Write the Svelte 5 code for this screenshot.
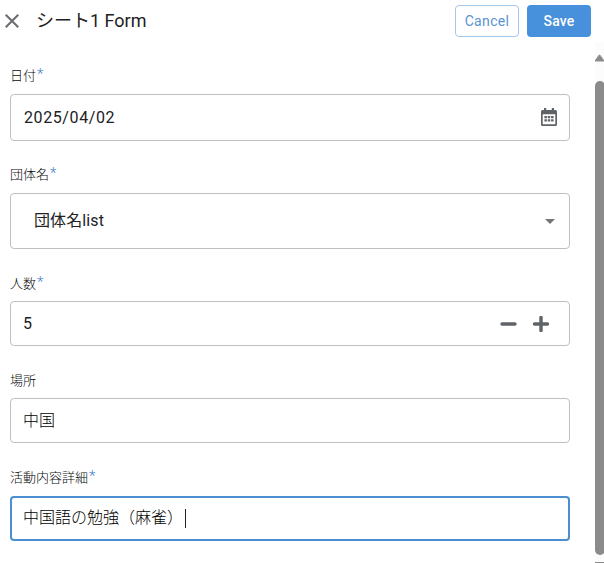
<script>
  const fields = [
    { kind: 'date', label: '日付', required: true, value: '2025/04/02' },
    { kind: 'select', label: '団体名', required: true, value: '団体名list' },
    { kind: 'number', label: '人数', required: true, value: '5' },
    { kind: 'text', label: '場所', required: false, value: '中国' },
    { kind: 'focused', label: '活動内容詳細', required: true, value: '中国語の勉強（麻雀）' }
  ];
</script>

<div class="screen">
  <header>
    <svg class="close" width="14" height="14" viewBox="0 0 14 14"><path d="M.7.7l12.6 12.6M13.3.7.7 13.3" stroke="#6c6e71" stroke-width="2.1" fill="none" /></svg>
    <h1>シート1 Form</h1>
    <button class="cancel">Cancel</button>
    <button class="save">Save</button>
  </header>
  <div class="body">
    <main>
      {#each fields as f}
        <section class={f.kind}>
          <div class="label">{f.label}{#if f.required}<span class="star">*</span>{/if}</div>
          <div class="box">
            <span class="value">{f.value}</span>
            {#if f.kind === 'focused'}<i class="caret"></i>{/if}
            {#if f.kind === 'date'}
              <svg class="cal" width="16" height="18" viewBox="0 0 16 18">
                <path fill="#5f6368" fill-rule="evenodd" d="M1.5 2H3V0h2.2v2h5.6V0H13v2h1.5A1.5 1.5 0 0 1 16 3.5v13a1.5 1.5 0 0 1-1.5 1.5h-13A1.5 1.5 0 0 1 0 16.5v-13A1.5 1.5 0 0 1 1.5 2zM1.7 6.2v9.600q0 .5.5.5h11.600q.5 0 .5-.5V6.200z" />
                <path fill="#5f6368" d="M3.4 8h2.500v2.300H3.400zM6.750 8h2.500v2.300h-2.500zM10.100 8h2.500v2.300h-2.500zM3.400 11.300h2.500v2.300H3.400zM6.750 11.300h2.500v2.300h-2.500zM10.100 11.300h2.500v2.300h-2.500z" />
              </svg>
            {:else if f.kind === 'select'}
              <svg class="arrow" width="10" height="5" viewBox="0 0 10 5"><path d="M0 0h10L5 5z" fill="#757575" /></svg>
            {:else if f.kind === 'number'}
              <svg class="steps" width="50" height="16" viewBox="0 0 50 16"><path d="M2 8h13M34.5 8h13M41 1.5v13" stroke="#5f6368" stroke-width="3.4" stroke-linecap="round" /></svg>
            {/if}
          </div>
        </section>
      {/each}
    </main>
    <div class="scroll">
      <svg width="11" height="8" viewBox="0 0 11 8"><path d="M1 7 5 1.2h1L10 7z" fill="#8b8b8b" stroke="#8b8b8b" stroke-linejoin="round" /></svg>
      <div class="thumb"></div>
      <div class="down"></div>
    </div>
  </div>
</div>

<style>
  :global(body) { background: #fff; overflow: hidden; }
  .screen {
    width: 604px; height: 563px; overflow: hidden; display: flex; flex-direction: column;
    font-family: Roboto, "Noto Sans CJK JP", sans-serif; color: #202124; background: #fff;
  }
  header { display: flex; align-items: center; height: 42px; padding: 0 13px 0 5px; box-sizing: border-box; flex: none; }
  .close { margin-right: 17px; }
  h1 { flex: 1; margin: 0; font-size: 18px; font-weight: 400; line-height: 24px; white-space: nowrap; }
  button {
    height: 32px; width: 64px; padding: 0; box-sizing: border-box; border-radius: 4px;
    font: 500 14px/20px Roboto, sans-serif; letter-spacing: .2px;
  }
  .cancel { background: #fff; border: 1px solid #a3c6eb; color: #5b93d0; margin-right: 8px; font-weight: 400; letter-spacing: .35px; }
  .save { background: #4790db; border: 0; color: #fff; }
  .body { display: flex; flex: 1; min-height: 0; }
  main { display: flex; flex-direction: column; gap: 24px; width: 560px; padding: 23px 25px 0 10px; flex: none; }
  section { flex: none; }
  .date { margin-bottom: -1px; }
  .label { height: 20px; margin-bottom: 8px; font-size: 13px; font-weight: 300; line-height: 21px; color: #08090b; white-space: nowrap; }
  .date .label, .select .label, .focused .label { margin-bottom: 9px; }
  .star { color: #4480cc; margin-left: 1px; font-size: 15px; font-weight: 300; line-height: 1; vertical-align: 1px; }
  .box {
    display: flex; align-items: center; height: 45px; padding: 0 12px; box-sizing: border-box;
    border: 1px solid #bdbfc2; border-radius: 4px; font-size: 16px; white-space: nowrap;
  }
  .value { flex: 1; line-height: 24px; }
  .date .box { height: 47px; padding-left: 13px; }
  .date .value { letter-spacing: .6px; }
  .cal { margin-bottom: 1px; }
  .select .box { height: 56px; padding-left: 23px; padding-right: 14px; }
  .select .value { letter-spacing: .1px; }
  .number .box { padding-right: 19px; }
  .text .value, .focused .value { font-weight: 300; color: #000; }
  .focused .box { border: 2px solid #4b8fd0; padding: 0 11px 1px; }
  .focused .value { flex: none; }
  .caret { width: 1px; height: 19px; background: #202124; margin-left: 2px; }
  .scroll { flex: 1; display: flex; flex-direction: column; background: #fcfcfc; padding-top: 12px; overflow: hidden; }
  .scroll svg { margin-left: -1px; flex: none; }
  .thumb { height: 474px; width: 10px; margin-top: 19px; border-radius: 5px; background: #8b8b8b; flex: none; }
  .down { height: 1px; width: 9px; margin-top: 7px; background: #8b8b8b; flex: none; }
</style>
